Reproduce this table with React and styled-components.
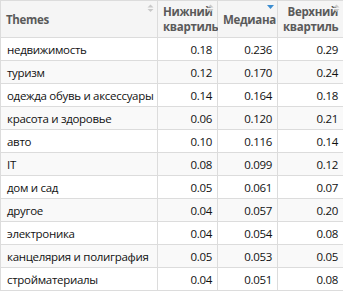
import styled, { createGlobalStyle } from 'styled-components';

const GlobalStyle = createGlobalStyle`
  html, body {
    margin: 0;
    padding: 0;
    background: #ffffff;
  }
  body {
    font-family: "Open Sans", "Noto Sans", sans-serif;
  }
`;

const rows = [
  ['недвижимость', '0.18', '0.236', '0.29'],
  ['туризм', '0.12', '0.170', '0.24'],
  ['одежда обувь и аксессуары', '0.14', '0.164', '0.18'],
  ['красота и здоровье', '0.06', '0.120', '0.21'],
  ['авто', '0.10', '0.116', '0.14'],
  ['IT', '0.08', '0.099', '0.12'],
  ['дом и сад', '0.05', '0.061', '0.07'],
  ['другое', '0.04', '0.057', '0.20'],
  ['электроника', '0.04', '0.054', '0.08'],
  ['канцелярия и полиграфия', '0.05', '0.053', '0.05'],
  ['стройматериалы', '0.04', '0.051', '0.08'],
];

const Table = styled.table`
  border-collapse: collapse;
  table-layout: fixed;
  width: 343px;
  font-size: 11.5px;
  letter-spacing: -0.3px;
  color: #111;
`;

const Col = styled.col`
  width: ${({ $w }) => $w}px;
`;

const HeadCell = styled.th`
  position: relative;
  box-sizing: border-box;
  height: 37px;
  padding: 0 5px 0 5px;
  background: #f5f5f5;
  border: 1px solid #dcdcdc;
  color: #5a5a5a;
  font-weight: 700;
  font-size: 11.5px;
  line-height: 15px;
  text-align: ${({ $right }) => ($right ? 'right' : 'left')};
  vertical-align: middle;
`;

const SortIcon = styled.svg`
  position: absolute;
  top: 3px;
  right: 3px;
`;

const Row = styled.tr`
  background: ${({ $striped }) => ($striped ? '#f9f9f9' : '#ffffff')};
`;

const Cell = styled.td`
  box-sizing: border-box;
  height: 23px;
  padding: 0 5px 0 6px;
  border: 1px solid #dcdcdc;
  text-align: ${({ $right }) => ($right ? 'right' : 'left')};
  white-space: nowrap;
  overflow: hidden;
  vertical-align: middle;
`;

const Sort = ({ active }) => (
  <SortIcon width="7" height="9" viewBox="0 0 7 9">
    {active ? (
      <path d="M0 1 L7 1 L3.5 5 Z" fill="#3c8dd0" />
    ) : (
      <>
        <path d="M0.5 3.5 L6.5 3.5 L3.5 0.5 Z" fill="#c9c9c9" />
        <path d="M0.5 5 L6.5 5 L3.5 8 Z" fill="#c9c9c9" />
      </>
    )}
  </SortIcon>
);

const App = () => {
  return (
    <>
      <GlobalStyle />
      <Table>
        <colgroup>
          <Col $w={157} />
          <Col $w={60} />
          <Col $w={60} />
          <Col $w={66} />
        </colgroup>
        <thead>
          <tr>
            <HeadCell>Themes<Sort /></HeadCell>
            <HeadCell $right>Нижний квартиль<Sort /></HeadCell>
            <HeadCell $right>Медиана<Sort active /></HeadCell>
            <HeadCell $right>Верхний квартиль<Sort /></HeadCell>
          </tr>
        </thead>
        <tbody>
          {rows.map((r, i) => (
            <Row key={r[0]} $striped={i % 2 === 1}>
              <Cell>{r[0]}</Cell>
              <Cell $right>{r[1]}</Cell>
              <Cell $right>{r[2]}</Cell>
              <Cell $right>{r[3]}</Cell>
            </Row>
          ))}
        </tbody>
      </Table>
    </>
  );
};

export default App;
